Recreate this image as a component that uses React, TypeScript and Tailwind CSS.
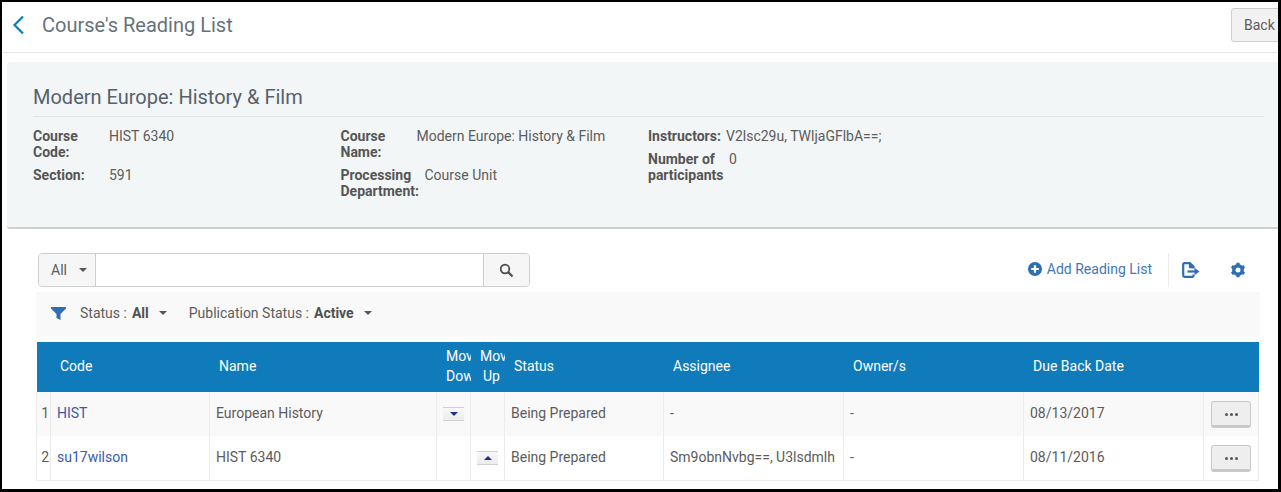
import React from "react";

function Caret({ className = "" }: { className?: string }) {
  return <span className={`inline-block w-0 h-0 border-x-[4px] border-x-transparent border-t-[4px] border-t-[#555] ${className}`} />;
}

function Field({ label, value, labelW }: { label: React.ReactNode; value: string; labelW: string }) {
  return (
    <div className="flex">
      <div className={`font-bold text-[#555] leading-[16px] ${labelW}`}>{label}</div>
      <div className="text-[#5c5c5c] leading-[16px]">{value}</div>
    </div>
  );
}

function MoveBtn({ up }: { up?: boolean }) {
  return (
    <div className="w-[21px] h-[14px] border-y border-[#cfcfcf] bg-gradient-to-b from-[#f8f8f8] to-[#ececec] flex items-center justify-center">
      <span className={`w-0 h-0 border-x-[4px] border-x-transparent ${up ? "border-b-[4px] border-b-[#1f2f8f]" : "border-t-[4px] border-t-[#1f2f8f]"}`} />
    </div>
  );
}

function Dots() {
  return (
    <button className="w-[40px] h-[27px] rounded-[3px] border border-[#c9c9c9] border-b-[3px] bg-[#eeeeee] flex items-center justify-center gap-[2px] pt-[1px]">
      <span className="w-[3px] h-[3px] rounded-full bg-[#555]" />
      <span className="w-[3px] h-[3px] rounded-full bg-[#555]" />
      <span className="w-[3px] h-[3px] rounded-full bg-[#555]" />
    </button>
  );
}

const cols = "grid grid-cols-[14px_159px_227px_34px_34px_159px_180px_180px_180px_55px]";
const cell = "border-r border-[#ececec] flex items-center pl-[6px] pb-[2px] overflow-hidden whitespace-nowrap text-[#5c5c5c]";

function Row({ n, code, name, up, assignee, date, bg, last }: { n: number; code: string; name: string; up?: boolean; assignee: string; date: string; bg: string; last?: boolean }) {
  return (
    <div className={`${cols} ${bg} shadow-[-1px_0_0_#ececec] ${last ? "h-[45px] border-b border-[#ececec]" : "h-[44px]"}`}>
      <div className="border-r border-[#ececec] flex items-center justify-end pr-[1px] pb-[2px] text-[#5c5c5c]">{n}</div>
      <div className={cell}><span className="text-[#3a5aa8]">{code}</span></div>
      <div className={cell}>{name}</div>
      <div className="border-r border-[#ececec] flex items-center pl-[6px]">{!up && <MoveBtn />}</div>
      <div className="border-r border-[#ececec] flex items-center pl-[6px]">{up && <MoveBtn up />}</div>
      <div className={cell}>Being Prepared</div>
      <div className={cell}>{assignee}</div>
      <div className={cell}>-</div>
      <div className={cell}>{date}</div>
      <div className="flex items-center pl-[7px] pt-[1px] border-r border-[#ececec]"><Dots /></div>
    </div>
  );
}

function Head({ children, cls = "" }: { children?: React.ReactNode; cls?: string }) {
  return <div className={`flex items-center overflow-hidden whitespace-nowrap pb-[2px] ${cls}`}>{children}</div>;
}

export default function App() {
  return (
    <div className="w-[1281px] h-[492px] overflow-hidden bg-black pt-[2px] pl-[2px] pr-[3px] pb-[3px] font-['Roboto',sans-serif] text-[14px]">
      <div className="h-full bg-white overflow-hidden">
        <div className="h-[51px] border-b border-[#e6e6e6] flex items-center pl-[9px]">
          <svg width="16" height="22" viewBox="0 0 16 22" fill="none" className="shrink-0 -mt-[4px]">
            <path d="M12 2.5 L3.5 11 L12 19.5" stroke="#0f7bbb" strokeWidth="2.2" />
          </svg>
          <h1 className="ml-[15px] -mt-[4px] text-[20px] text-[#66727a] leading-none">Course's Reading List</h1>
          <button className="ml-auto -mt-[4px] w-[60px] h-[34px] shrink-0 -mr-[13px] border border-[#cfcfcf] rounded-[3px] bg-[#f2f2f2] text-left pl-[12px] text-[#5c5c5c]">Back</button>
        </div>
        <div className="ml-[5px] mt-[9px] h-[167px] bg-[#f3f6f7] rounded-l-[3px] border-b-2 border-[#d0d0d0] pl-[26px] pr-[14px]">
          <div className="h-[55px] border-b border-[#e0e3e4] pt-[23px] text-[20px] leading-[24px] text-[#56616a]">Modern Europe: History &amp; Film</div>
          <div className="flex pt-[11px]">
            <div className="w-[307.5px] flex flex-col gap-[7px]">
              <Field label={<>Course<br />Code:</>} value="HIST 6340" labelW="w-[76px]" />
              <Field label="Section:" value="591" labelW="w-[76px]" />
            </div>
            <div className="w-[307.5px] flex flex-col gap-[7px]">
              <Field label={<>Course<br />Name:</>} value="Modern Europe: History & Film" labelW="w-[76px]" />
              <Field label={<>Processing<br />Department:</>} value="Course Unit" labelW="w-[84px]" />
            </div>
            <div className="flex flex-col gap-[7px]">
              <Field label="Instructors:" value="V2lsc29u, TWljaGFlbA==;" labelW="w-[78px]" />
              <Field label={<>Number of<br />participants</>} value="0" labelW="w-[81px]" />
            </div>
          </div>
        </div>
        <div className="pl-[34px] pt-[24px]">
          <div className="flex items-start pr-[33px]">
            <div className="ml-[2px] w-[492px] h-[34px] flex border border-[#cfcfcf] rounded-[4px] overflow-hidden">
              <div className="w-[57px] bg-[#f6f6f6] border-r border-[#cfcfcf] flex items-center pl-[12px] gap-[12px] text-[#5c5c5c]">All <Caret /></div>
              <div className="flex-1 bg-white" />
              <div className="w-[46px] bg-[#f6f6f6] border-l border-[#cfcfcf] flex items-center justify-center">
                <svg width="15" height="15" viewBox="0 0 15 15" fill="none">
                  <circle cx="6" cy="6" r="4.3" stroke="#4a4a4a" strokeWidth="1.7" />
                  <path d="M9.3 9.3 L13.5 13.5" stroke="#4a4a4a" strokeWidth="2.2" />
                </svg>
              </div>
            </div>
            <div className="ml-auto flex items-center h-[34px] text-[#3f78b5]">
              <svg width="14" height="14" viewBox="0 0 14 14" className="mr-[5px] -mt-[2px]">
                <circle cx="7" cy="7" r="7" fill="#2f6db5" />
                <path d="M7 3.2 V10.8 M3.2 7 H10.8" stroke="#fff" strokeWidth="2.2" />
              </svg>
              <span className="-mt-[2px]">Add Reading List</span>
              <div className="ml-[16px] h-[34px] border-l border-[#ececec]" />
              <svg width="18" height="16" viewBox="0 0 18 16" fill="none" className="ml-[13px]">
                <path d="M8 1.2 H2.4 Q1.2 1.2 1.2 2.4 V13.6 Q1.2 14.8 2.4 14.8 H10.5 Q11.5 14.8 11.5 13.8 V12.5 M11.5 6.5 V4.8 L8 1.2 V5.2 H11.5" stroke="#2f6db5" strokeWidth="2.2" fill="none" />
                <path d="M5.5 9.5 H13" stroke="#2f6db5" strokeWidth="2.2" />
                <path d="M12.5 5.8 L17.5 9.5 L12.5 13.2 Z" fill="#2f6db5" />
              </svg>
              <svg width="16" height="16" viewBox="0 0 16 16" className="ml-[30px] mr-[-1px]">
                <circle cx="8" cy="8" r="4.2" fill="none" stroke="#2f6db5" strokeWidth="3.4" />
                <g stroke="#2f6db5" strokeWidth="3.2">
                  <path d="M8 0.8 V3.5 M8 12.5 V15.2 M1.8 4.4 L4.1 5.8 M11.9 10.2 L14.2 11.6 M1.8 11.6 L4.1 10.2 M11.9 5.8 L14.2 4.4" />
                </g>
              </svg>
            </div>
          </div>
          <div className="mt-[5px] w-[1224px] h-[44px] bg-[#f9f9f9] flex items-center pl-[15px] pb-[2px] text-[#5c5c5c]">
            <svg width="15" height="13" viewBox="0 0 15 13" className="mr-[14px] mt-[1px]">
              <path d="M0 0 H15 V1.5 L9.5 7 V13 L5.5 11 V7 L0 1.5 Z" fill="#2f6db5" />
            </svg>
            <span>Status : </span>
            <b className="ml-[5px] font-bold text-[#505050]">All</b>
            <Caret className="ml-[10px]" />
            <span className="ml-[22px]">Publication Status : </span>
            <b className="ml-[5px] font-bold text-[#505050]">Active</b>
            <Caret className="ml-[10px]" />
          </div>
          <div className="mt-[6px] ml-[1px] w-[1222px]">
            <div className={`${cols} h-[50px] bg-[#0f7bbb] text-white`}>
              <div />
              <Head cls="pl-[9px]">Code</Head>
              <Head cls="pl-[9px]">Name</Head>
              <Head cls="leading-[20px] pl-[9px]"><span>Move<br />Down</span></Head>
              <Head cls="leading-[20px] pl-[9px]"><span>Move<br /><span className="pl-[3px]">Up</span></span></Head>
              <Head cls="pl-[9px]">Status</Head>
              <Head cls="pl-[9px]">Assignee</Head>
              <Head cls="pl-[9px]">Owner/s</Head>
              <Head cls="pl-[9px]">Due Back Date</Head>
              <div />
            </div>
            <Row n={1} code="HIST" name="European History" assignee="-" date="08/13/2017" bg="bg-[#f9f9f9]" />
            <Row n={2} code="su17wilson" name="HIST 6340" up assignee="Sm9obnNvbg==, U3lsdmlh" date="08/11/2016" bg="bg-white" last />
          </div>
        </div>
      </div>
    </div>
  );
}
